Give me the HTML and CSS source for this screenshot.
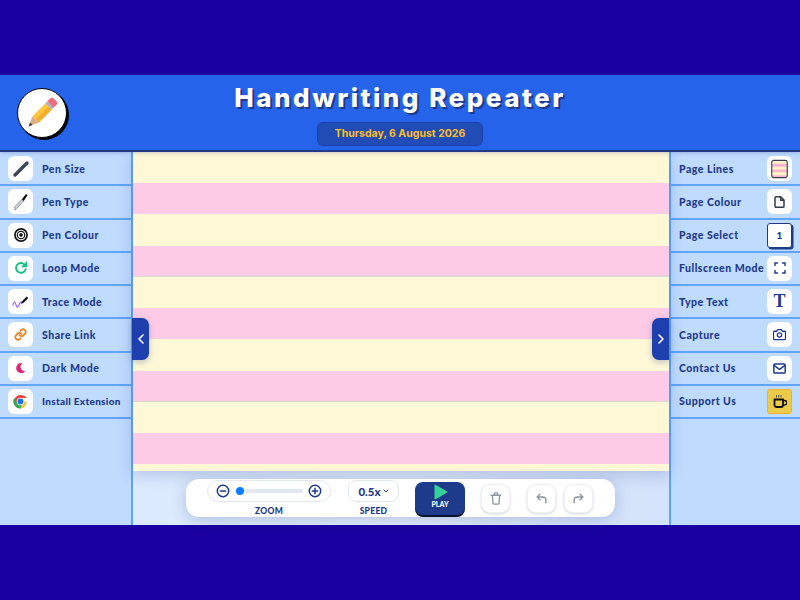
FILE: index.html
```html
<!DOCTYPE html>
<html lang="en">
<head>
    <meta charset="UTF-8">
    <meta name="viewport" content="width=device-width, initial-scale=1.0">
    <title>Handwriting Repeater</title>
    <link rel="stylesheet" href="styles.css">
</head>
<body>
    <div class="app">
        <header class="header">
            <div class="logo">
                <svg width="42" height="42" viewBox="0 0 42 42">
                    <g transform="rotate(45 21 21)">
                        <path d="M16.5 9h9v3h-9z" fill="#a9b4c0"/>
                        <path d="M16.5 4.5a2 2 0 0 1 2-2h5a2 2 0 0 1 2 2V9h-9z" fill="#ee6b7d"/>
                        <path d="M16.5 12h9v18h-9z" fill="#fcc73d"/>
                        <path d="M21 12h4.500v18H21z" fill="#f2ae2c"/>
                        <path d="M16.500 30h9L21 40z" fill="#e0ac82"/>
                        <path d="M19.300 36.200h3.400L21 40z" fill="#3c3c3c"/>
                    </g>
                </svg>
            </div>
            <div class="title-block">
                <h1>Handwriting Repeater</h1>
                <div class="date">Thursday, 6 August 2026</div>
            </div>
        </header>

        <div class="main">
            <aside class="side">
                <div class="tool">
                    <span class="icon">
                        <svg width="18" height="18" viewBox="0 0 18 18"><path d="M3 15 15 3" stroke="#3d4658" stroke-width="3.400" stroke-linecap="round"/></svg>
                    </span>
                    <span class="tool-label">Pen Size</span>
                </div>
                <div class="tool">
                    <span class="icon">
                        <svg width="18" height="18" viewBox="0 0 20 20"><path d="M3.500 19 3 15.500 11 7l2 1.800-7.500 8.200z" fill="#d5d8dc" stroke="#6b7078" stroke-width=".8"/><path d="m11 7 4.500-6 1.800 1.500-4.300 6.300z" fill="#111"/></svg>
                    </span>
                    <span class="tool-label">Pen Type</span>
                </div>
                <div class="tool">
                    <span class="icon">
                        <svg width="14" height="14" viewBox="0 0 18 18" fill="none" stroke="#151515"><circle cx="9" cy="9" r="7.800" stroke-width="2.200"/><circle cx="9" cy="9" r="4.800" stroke-width="1.600"/><circle cx="9" cy="9" r="1.800" fill="#151515"/></svg>
                    </span>
                    <span class="tool-label">Pen Colour</span>
                </div>
                <div class="tool">
                    <span class="icon">
                        <svg width="14" height="14" viewBox="0 0 18 18" fill="none" stroke="#17bf80" stroke-width="2.400" stroke-linecap="round" stroke-linejoin="round"><path d="M15 10.500a6.300 6.300 0 1 1-1.500-6L15.500 6.500"/><path d="M15.800 2v4.800H11"/></svg>
                    </span>
                    <span class="tool-label">Loop Mode</span>
                </div>
                <div class="tool">
                    <span class="icon">
                        <svg width="17" height="14" viewBox="0 0 22 18" fill="none"><path d="M1 13c1.500-5 3-5 4 -1s2.500 5 4 1 2-5 4-2" stroke="#a46cf5" stroke-width="1.700" stroke-linecap="round"/><path d="m12 11 1-3 6-6 2 2-6 6z" fill="#111"/></svg>
                    </span>
                    <span class="tool-label">Trace Mode</span>
                </div>
                <div class="tool">
                    <span class="icon">
                        <svg width="13" height="13" viewBox="0 0 24 24" fill="none" stroke="#e8821e" stroke-width="3.200" stroke-linecap="round"><path d="M10 13a5 5 0 0 0 7.500.5l3-3a5 5 0 0 0-7-7l-1.700 1.700"/><path d="M14 11a5 5 0 0 0-7.500-.5l-3 3a5 5 0 0 0 7 7l1.700-1.700"/></svg>
                    </span>
                    <span class="tool-label">Share Link</span>
                </div>
                <div class="tool">
                    <span class="icon">
                        <svg width="11" height="12" viewBox="0 0 16 16"><path d="M10.500 1A7.300 7.300 0 1 0 15 12.500 6.500 6.500 0 0 1 10.500 1z" fill="#db2777"/></svg>
                    </span>
                    <span class="tool-label">Dark Mode</span>
                </div>
                <div class="tool">
                    <span class="icon">
                        <svg width="15" height="15" viewBox="0 0 48 48">
                            <path d="M24 24 11.500 31.500 4 18A23 23 0 0 1 44 12.500H24z" fill="#ea4335"/>
                            <path d="M24 24h20A23 23 0 0 1 24 47l10-19z" fill="#fbc02d"/>
                            <path d="M24 47A23 23 0 0 1 4 12.500L14 30a11 11 0 0 0 14 4z" fill="#34a853"/>
                            <circle cx="24" cy="24" r="12" fill="#fff"/>
                            <circle cx="24" cy="24" r="9.500" fill="#1a73e8"/>
                        </svg>
                    </span>
                    <span class="tool-label tool-label-small">Install Extension</span>
                </div>
            </aside>

            <div class="center">
                <button class="tab tab-left">
                    <svg width="8" height="12" viewBox="0 0 8 12" fill="none" stroke="#fff" stroke-width="1.600" stroke-linecap="round" stroke-linejoin="round"><path d="M6 2 2 6l4 4"/></svg>
                </button>
                <button class="tab tab-right">
                    <svg width="8" height="12" viewBox="0 0 8 12" fill="none" stroke="#fff" stroke-width="1.600" stroke-linecap="round" stroke-linejoin="round"><path d="M2 2l4 4-4 4"/></svg>
                </button>

                <div class="canvas"></div>

                <div class="toolbar">
                    <div class="group">
                        <div class="zoom-pill">
                            <svg width="14" height="14" viewBox="0 0 14 14" fill="none" stroke="#1e3a8a" stroke-width="1.500" stroke-linecap="round"><circle cx="7" cy="7" r="5.700"/><path d="M4.300 7h5.400"/></svg>
                            <span class="slider"><span class="thumb"></span></span>
                            <svg width="14" height="14" viewBox="0 0 14 14" fill="none" stroke="#1e3a8a" stroke-width="1.500" stroke-linecap="round"><circle cx="7" cy="7" r="5.700"/><path d="M4.300 7h5.400M7 4.300v5.400"/></svg>
                        </div>
                        <span class="group-label">ZOOM</span>
                    </div>
                    <div class="group group-speed">
                        <div class="speed-pill">0.5x<svg width="6" height="4" viewBox="0 0 6 4" fill="none" stroke="#1e3a8a"><path d="m.7.700 2.300 2.300L5.300.7"/></svg></div>
                        <span class="group-label">SPEED</span>
                    </div>
                    <button class="play">
                        <svg width="15" height="16" viewBox="0 0 15 16"><path d="M1.500 1.500v13a.8.8 0 0 0 1.200.7l11-6.500a.8.8 0 0 0 0-1.400L2.700.8a.8.8 0 0 0-1.200.7z" fill="#34d399"/></svg>
                        PLAY
                    </button>
                    <button class="round-btn trash">
                        <svg width="12" height="13" viewBox="0 0 15 16" fill="none" stroke="#8e959f" stroke-width="1.700" stroke-linecap="round" stroke-linejoin="round"><path d="M1.500 4h12M3 4l.7 10a1 1 0 0 0 1 1h5.600a1 1 0 0 0 1-1L12 4M5.500 4V2a1 1 0 0 1 1-1h2a1 1 0 0 1 1 1v2"/></svg>
                    </button>
                    <button class="round-btn undo">
                        <svg width="11" height="11" viewBox="0 0 14 14" fill="none" stroke="#8e959f" stroke-width="1.800" stroke-linecap="round" stroke-linejoin="round"><path d="M5 1.500 1.500 5 5 8.500M1.500 5H9a3.500 3.500 0 0 1 3.500 3.500V12.500"/></svg>
                    </button>
                    <button class="round-btn">
                        <svg width="11" height="11" viewBox="0 0 14 14" fill="none" stroke="#8e959f" stroke-width="1.800" stroke-linecap="round" stroke-linejoin="round"><path d="M9 1.500 12.500 5 9 8.500M12.500 5H5a3.500 3.500 0 0 0-3.500 3.500V12.500"/></svg>
                    </button>
                </div>
            </div>

            <aside class="side side-right">
                <div class="tool">
                    <span class="tool-label">Page Lines</span>
                    <span class="icon">
                        <svg width="17" height="20" viewBox="0 0 18 20"><rect x=".8" y=".8" width="16.400" height="18.400" rx="2" fill="#fef3c7"/><path d="M1 4.500h16v3H1zM1 10.500h16v3H1zM1 16.500h16v2H1z" fill="#fbb6ce"/><rect x=".8" y=".8" width="16.400" height="18.400" rx="2" fill="none" stroke="#374151" stroke-width="1.200"/></svg>
                    </span>
                </div>
                <div class="tool">
                    <span class="tool-label">Page Colour</span>
                    <span class="icon">
                        <svg width="11" height="12" viewBox="0 0 14 16" fill="none" stroke="#333c4d" stroke-width="2" stroke-linejoin="round"><path d="M2.500 1H8.500L13 5.500V13.500a1.500 1.500 0 0 1-1.500 1.500h-9A1.500 1.500 0 0 1 1 13.500v-11A1.500 1.500 0 0 1 2.500 1z"/><path d="M8.500 1v4.500H13"/></svg>
                    </span>
                </div>
                <div class="tool">
                    <span class="tool-label">Page Select</span>
                    <span class="icon icon-page">1</span>
                </div>
                <div class="tool">
                    <span class="tool-label">Fullscreen Mode</span>
                    <span class="icon">
                        <svg width="12" height="12" viewBox="0 0 12 12" fill="none" stroke="#1e3a8a" stroke-width="1.400" stroke-linecap="round"><path d="M1 3.500V1h2.500M8.500 1H11v2.500M11 8.500V11H8.500M3.500 11H1V8.500"/></svg>
                    </span>
                </div>
                <div class="tool">
                    <span class="tool-label">Type Text</span>
                    <span class="icon icon-serif">T</span>
                </div>
                <div class="tool">
                    <span class="tool-label">Capture</span>
                    <span class="icon">
                        <svg width="13" height="13" viewBox="0 0 14 14" fill="none" stroke="#1e3a8a" stroke-width="1.400" stroke-linejoin="round"><path d="M1.500 3.500h2.500l1-1.800h4l1 1.800h2.500a1 1 0 0 1 1 1v7a1 1 0 0 1-1 1h-11a1 1 0 0 1-1-1v-7a1 1 0 0 1 1-1z"/><circle cx="7" cy="7.500" r="2.300"/></svg>
                    </span>
                </div>
                <div class="tool">
                    <span class="tool-label">Contact Us</span>
                    <span class="icon">
                        <svg width="13" height="11" viewBox="0 0 14 12" fill="none" stroke="#1e3a8a" stroke-width="1.600" stroke-linejoin="round"><rect x=".8" y="1" width="12.400" height="10" rx="1.200"/><path d="m1 2.500 6 4.500 6-4.500"/></svg>
                    </span>
                </div>
                <div class="tool">
                    <span class="tool-label">Support Us</span>
                    <span class="icon icon-coffee">
                        <svg width="14" height="14" viewBox="0 0 14 14" fill="none" stroke="#111"><path d="M1.500 5.500h8.500v5.500a2 2 0 0 1-2 2H3.500a2 2 0 0 1-2-2z" stroke-width="1.800"/><path d="M10 6.500h1.500a1.700 1.700 0 0 1 0 4.500H10" stroke-width="1.400"/><path d="M3.500 1v2.500M5.700 1v2.500M8 1v2.500" stroke-width="1" stroke="#555"/></svg>
                    </span>
                </div>
            </aside>
        </div>
    </div>
</body>
</html>
```

FILE: styles.css
```css
* {
    box-sizing: border-box;
}
body {
    margin: 0;
    height: 600px;
    display: flex;
    align-items: center;
    background: #1a00a0;
    font-family: Lato, "Liberation Sans", sans-serif;
}
button {
    border: none;
    padding: 0;
    font-family: inherit;
}
.app {
    width: 800px;
    height: 450px;
    display: flex;
    flex-direction: column;
}

/* header */
.header {
    height: 77px;
    position: relative;
    z-index: 2;
    display: grid;
    grid-template-columns: 1fr auto 1fr;
    align-items: center;
    padding-left: 17px;
    background: #2563eb;
    border-bottom: 2px solid #1e3a8a;
    box-shadow: 0 1px 4px rgba(30, 58, 138, .25);
}
.logo {
    width: 50px;
    height: 50px;
    display: flex;
    align-items: center;
    justify-content: center;
    background: #fff;
    border: 1.500px solid #000;
    border-radius: 50%;
    box-shadow: 2px 2px 0 #000;
}
.title-block {
    display: flex;
    flex-direction: column;
    align-items: center;
    margin-left: -17px;
}
h1 {
    margin: 0;
    color: #fff;
    font-family: Inter, "Liberation Sans", sans-serif;
    font-size: 26px;
    font-weight: 800;
    line-height: 36px;
    letter-spacing: 2.500px;
    text-shadow: 2px 2px 0 #1e3a8a;
}
.date {
    width: 166px;
    height: 24px;
    margin-top: 6px;
    display: flex;
    align-items: center;
    justify-content: center;
    color: #fbbf24;
    background: #214bb5;
    border: 1px solid #1e40af;
    border-radius: 6px;
    font-family: Inter, "Liberation Sans", sans-serif;
    font-size: 10.500px;
    font-weight: 700;
}

/* sidebars */
.main {
    flex: 1;
    display: flex;
    min-height: 0;
}
.side {
    width: 133px;
    flex: none;
    padding-top: 1px;
    background: #bfdbfe;
    border-right: 2px solid #60a5fa;
}
.side-right {
    width: 131px;
    border-right: none;
    border-left: 2px solid #60a5fa;
}
.tool {
    height: 33.250px;
    display: flex;
    align-items: center;
    gap: 9px;
    padding-left: 8px;
    border-bottom: 2px solid #60a5fa;
    color: #1e3a8a;
}
.side-right .tool {
    justify-content: space-between;
    padding: 0 8px;
    gap: 0;
}
.tool-label {
    font-size: 10.500px;
    font-weight: 900;
    letter-spacing: .5px;
    white-space: nowrap;
}
.tool-label-small {
    font-size: 10px;
    letter-spacing: .3px;
}
.icon {
    width: 25px;
    height: 25px;
    flex: none;
    display: flex;
    align-items: center;
    justify-content: center;
    background: #fff;
    border-radius: 6px;
}
.icon-page {
    border: 1px solid #1e3a8a;
    box-shadow: 1.500px 1.500px 0 #1e3a8a;
    color: #1e3a8a;
    font-size: 10px;
    font-weight: 900;
    border-radius: 3px;
}
.icon-serif {
    color: #1e3a8a;
    font-family: "Liberation Serif", serif;
    font-size: 18px;
    font-weight: 700;
}
.icon-coffee {
    background: #eccb4a;
    border: 1px solid #f0b429;
    border-radius: 3px;
}

/* writing area */
.center {
    flex: 1;
    min-width: 0;
    position: relative;
    background: linear-gradient(90deg, #dbeafe, #e6effd 50%, #d3e2fb);
}
.canvas {
    height: 319px;
    background: repeating-linear-gradient(180deg,
        #fef8d6 0, #fef8d6 31.200px,
        #fdcbe6 31.200px, #fdcbe6 61.700px, #d9d9d0 61.700px, #d9d9d0 62.500px);
    box-shadow: 0 4px 14px rgba(30, 58, 138, .22);
}
.tab {
    position: absolute;
    top: 166px;
    left: -1px;
    z-index: 1;
    width: 17px;
    height: 42px;
    display: flex;
    align-items: center;
    justify-content: center;
    background: #1e40af;
    box-shadow: 0 2px 6px rgba(30, 58, 138, .3);
}
.tab-left {
    border-radius: 0 7px 7px 0;
}
.tab-right {
    left: auto;
    right: 0;
    border-radius: 7px 0 0 7px;
}

/* bottom toolbar */
.toolbar {
    width: 429px;
    height: 38px;
    margin: 8px 0 0 53px;
    padding-left: 21px;
    display: flex;
    background: #fff;
    border-radius: 13px;
    box-shadow: 0 3px 16px rgba(30, 58, 138, .25);
}
.group {
    margin-top: 1px;
    margin-right: 17px;
    display: flex;
    flex-direction: column;
    align-items: center;
}
.group-speed {
    margin-right: 16px;
}
.group-label {
    margin-top: 4px;
    color: #1e3a8a;
    font-size: 8.500px;
    font-weight: 900;
    line-height: 10px;
    letter-spacing: .3px;
}
.zoom-pill {
    width: 124px;
    height: 22px;
    display: flex;
    align-items: center;
    gap: 5px;
    padding: 0 8px;
    border: 1px solid #e2e8f0;
    border-radius: 11px;
}
.slider {
    flex: 1;
    height: 4px;
    display: flex;
    align-items: center;
    background: #e2e8f0;
    border-radius: 2px;
}
.thumb {
    width: 8px;
    height: 8px;
    margin-left: 1px;
    background: #0a7cff;
    border-radius: 50%;
}
.speed-pill {
    width: 51px;
    height: 22px;
    display: flex;
    align-items: center;
    justify-content: center;
    gap: 2px;
    color: #1e3a8a;
    border: 1px solid #e2e8f0;
    border-radius: 8px;
    font-size: 11.500px;
    font-weight: 900;
}
.play {
    width: 50px;
    height: 33px;
    margin-top: 3px;
    display: flex;
    flex-direction: column;
    align-items: center;
    color: #fff;
    background: #1e3a8a;
    border-radius: 8px;
    box-shadow: 0 2px 0 #0b1330;
    padding-top: 2px;
    font-size: 7px;
    font-weight: 900;
    line-height: 9px;
}
.round-btn {
    width: 29px;
    height: 29px;
    margin: 5px 0 0 8px;
    display: flex;
    align-items: center;
    justify-content: center;
    background: #fff;
    border-radius: 9px;
    border: 1px solid #eef1f5;
    box-shadow: 0 1px 3px rgba(15, 23, 42, .18);
}
.trash {
    margin-left: 16px;
}
.undo {
    margin-left: 17px;
}
```
